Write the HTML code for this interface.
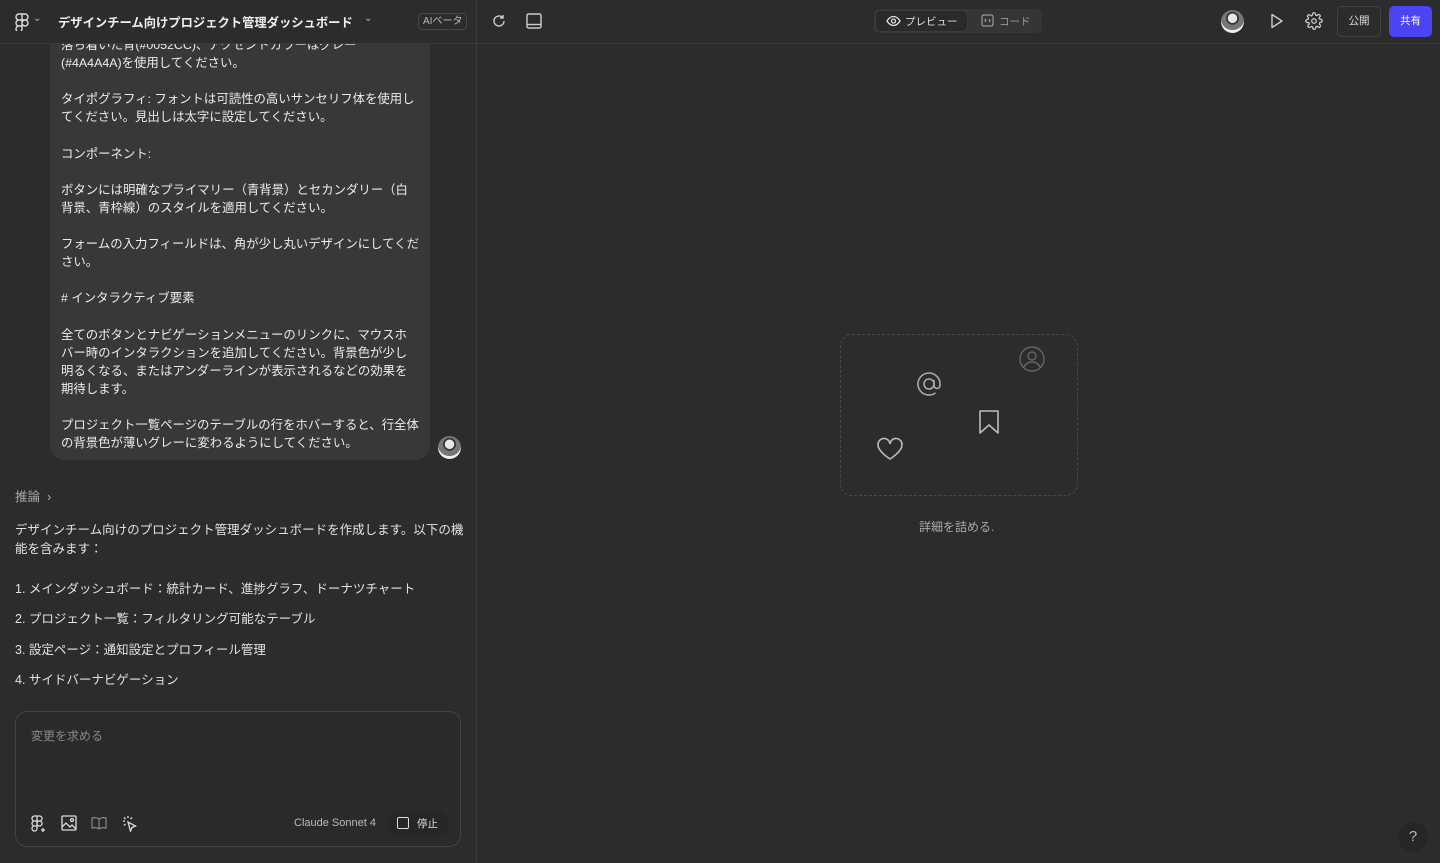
<!DOCTYPE html>
<html><head><meta charset="utf-8"><style>
*{box-sizing:border-box;margin:0;padding:0}
body{width:1440px;height:863px;background:#2c2c2c;color:#e6e6e6;font-family:"Liberation Sans","Noto Sans CJK JP",sans-serif;font-size:13px;overflow:hidden;position:relative}
.hdr{position:absolute;left:0;top:0;width:1440px;height:44px;background:#2c2c2c;border-bottom:1px solid #3a3a3a;z-index:5}
.vline{position:absolute;left:476px;top:0;width:1px;height:863px;background:#3a3a3a;z-index:6}
.abs{position:absolute}
.bubble{position:absolute;left:50px;top:20px;width:380px;height:440px;background:#383838;border-radius:14px;padding:16px 11px;line-height:18.1px;color:#ececec;font-size:12.4px;white-space:nowrap;overflow:hidden}
.bubble p{margin:0}
.ans{position:absolute;left:15px;color:#e2e2e2;font-size:12.5px;white-space:nowrap}
svg{display:block}
.av{border-radius:50%;background:radial-gradient(circle at 50% 36%,#e8e8e8 0 24%,#3a3a3a 26% 34%,#777 36% 62%,#eee 64%)}
</style></head><body>
<div class="vline"></div>
<div class="hdr">
 <svg class="abs" style="left:15px;top:13px" width="14" height="18" viewBox="0 0 14 18" fill="none" stroke="#ddd" stroke-width="1.4"><path d="M7 1H4a3 3 0 0 0 0 6h3zM7 1h3a3 3 0 0 1 0 6H7zM7 7H4a3 3 0 0 0 0 6h3zM10 7a3 3 0 1 1 0 6 3 3 0 0 1 0-6zM7 13H4a3 3 0 1 0 3 3z"/></svg>
 <div class="abs" style="left:33px;top:13px;color:#bbb;font-size:10px">⌄</div>
 <div class="abs" style="left:58px;top:13px;font-size:12.3px;font-weight:bold;color:#f0f0f0;white-space:nowrap">デザインチーム向けプロジェクト管理ダッシュボード</div>
 <div class="abs" style="left:364px;top:13px;color:#bbb;font-size:10px">⌄</div>
 <div class="abs" style="left:418px;top:13px;height:17px;padding:0 4px;border:1px solid #484848;border-radius:4px;font-size:10px;line-height:15px;color:#bbb">AIベータ</div>
 <svg class="abs" style="left:491px;top:13px" width="16" height="16" viewBox="0 0 16 16" fill="none" stroke="#ccc" stroke-width="1.4"><path d="M13 8a5 5 0 1 1-1.5-3.6M12 2v3h-3"/></svg>
 <svg class="abs" style="left:525px;top:12px" width="18" height="18" viewBox="0 0 18 18" fill="none" stroke="#ccc" stroke-width="1.4"><rect x="2" y="2" width="14" height="14" rx="1.5"/><path d="M2 12.5h14"/></svg>
 <div class="abs" style="left:874px;top:9px;width:168px;height:24px;background:#353535;border-radius:5px"></div>
 <div class="abs" style="left:875px;top:10px;width:93px;height:22px;background:#2a2a2a;border:1px solid #3c3c3c;border-radius:5px"></div>
 <svg class="abs" style="left:886px;top:14px" width="15" height="14" viewBox="0 0 15 14" fill="none" stroke="#ddd" stroke-width="1.3"><path d="M1 7s2.5-4.5 6.5-4.5S14 7 14 7s-2.5 4.5-6.5 4.5S1 7 1 7z"/><circle cx="7.5" cy="7" r="2"/></svg>
 <div class="abs" style="left:905px;top:14px;font-size:10.5px;color:#ddd">プレビュー</div>
 <svg class="abs" style="left:981px;top:14px" width="13" height="13" viewBox="0 0 13 13" fill="none" stroke="#999" stroke-width="1.2"><rect x="1" y="1" width="11" height="11" rx="1.5"/><path d="M5 5l-1 1.5L5 8M8 5l1 1.5L8 8"/></svg>
 <div class="abs" style="left:999px;top:14px;font-size:10.5px;color:#999">コード</div>
 <div class="abs av" style="left:1221px;top:10px;width:23px;height:23px"></div>
 <svg class="abs" style="left:1270px;top:13px" width="14" height="16" viewBox="0 0 14 16" fill="none" stroke="#ccc" stroke-width="1.4"><path d="M2 1.5v13l10-6.5z" stroke-linejoin="round"/></svg>
 <svg class="abs" style="left:1305px;top:12px" width="18" height="18" viewBox="0 0 24 24" fill="none" stroke="#ccc" stroke-width="1.7"><circle cx="12" cy="12" r="3"/><path d="M19.4 15a1.6 1.6 0 0 0 .3 1.8l.1.1a2 2 0 1 1-2.8 2.8l-.1-.1a1.6 1.6 0 0 0-2.7 1.1V21a2 2 0 1 1-4 0v-.1a1.6 1.6 0 0 0-2.7-1.1l-.1.1a2 2 0 1 1-2.8-2.8l.1-.1A1.6 1.6 0 0 0 3.6 14H3a2 2 0 1 1 0-4h.1a1.6 1.6 0 0 0 1.1-2.7l-.1-.1a2 2 0 1 1 2.8-2.8l.1.1A1.6 1.6 0 0 0 9.9 3.6V3a2 2 0 1 1 4 0v.1a1.6 1.6 0 0 0 2.7 1.1l.1-.1a2 2 0 1 1 2.8 2.8l-.1.1a1.6 1.6 0 0 0 1.1 2.7H21a2 2 0 1 1 0 4h-.1a1.6 1.6 0 0 0-1.5 1.3z"/></svg>
 <div class="abs" style="left:1337px;top:6px;width:44px;height:31px;border:1px solid #444;border-radius:5px;font-size:10.5px;line-height:29px;text-align:center;color:#ddd">公開</div>
 <div class="abs" style="left:1389px;top:6px;width:43px;height:31px;background:#4a44f5;border-radius:5px;font-size:10.5px;line-height:31px;text-align:center;color:#fff">共有</div>
</div>

<div class="bubble">
<p>落ち着いた青(#0052CC)、アクセントカラーはグレー</p>
<p>(#4A4A4A)を使用してください。</p><p>&nbsp;</p>
<p>タイポグラフィ: フォントは可読性の高いサンセリフ体を使用し</p><p>てください。見出しは太字に設定してください。</p><p>&nbsp;</p>
<p>コンポーネント:</p><p>&nbsp;</p>
<p>ボタンには明確なプライマリー（青背景）とセカンダリー（白</p><p>背景、青枠線）のスタイルを適用してください。</p><p>&nbsp;</p>
<p>フォームの入力フィールドは、角が少し丸いデザインにしてくだ</p><p>さい。</p><p>&nbsp;</p>
<p># インタラクティブ要素</p><p>&nbsp;</p>
<p>全てのボタンとナビゲーションメニューのリンクに、マウスホ</p><p>バー時のインタラクションを追加してください。背景色が少し</p><p>明るくなる、またはアンダーラインが表示されるなどの効果を</p><p>期待します。</p><p>&nbsp;</p>
<p>プロジェクト一覧ページのテーブルの行をホバーすると、行全体</p><p>の背景色が薄いグレーに変わるようにしてください。</p>
</div>
<div class="abs av" style="left:438px;top:436px;width:23px;height:23px"></div>

<div class="ans" style="top:486px;color:#aaa">推論 &nbsp;›</div>
<div class="ans" style="top:521px;line-height:19px">デザインチーム向けのプロジェクト管理ダッシュボードを作成します。以下の機<br>能を含みます：</div>
<div class="ans" style="top:578px">1. メインダッシュボード：統計カード、進捗グラフ、ドーナツチャート</div>
<div class="ans" style="top:608px">2. プロジェクト一覧：フィルタリング可能なテーブル</div>
<div class="ans" style="top:639px">3. 設定ページ：通知設定とプロフィール管理</div>
<div class="ans" style="top:669px">4. サイドバーナビゲーション</div>

<div class="abs" style="left:15px;top:711px;width:446px;height:136px;border:1px solid #444;border-radius:12px;background:#2a2a2a"></div>
<div class="abs" style="left:31px;top:727px;color:#888;font-size:12px">変更を求める</div>
<svg class="abs" style="left:31px;top:815px" width="16" height="17" viewBox="0 0 16 17" fill="none" stroke="#ddd" stroke-width="1.3"><path d="M6 1H3.5a2.5 2.5 0 0 0 0 5H6zM6 1h2.5a2.5 2.5 0 0 1 0 5H6zM6 6H3.5a2.5 2.5 0 0 0 0 5H6zM8.5 6a2.5 2.5 0 1 1 0 5 2.5 2.5 0 0 1 0-5zM6 11H3.5A2.5 2.5 0 1 0 6 13.5zM12 13v4M10 15h4"/></svg>
<svg class="abs" style="left:61px;top:815px" width="16" height="16" viewBox="0 0 16 16" fill="none" stroke="#ddd" stroke-width="1.3"><rect x="1" y="1" width="14" height="14" rx="1"/><path d="M1 12l4-4 4 4 2-2 4 4"/><circle cx="11" cy="5" r="1.5"/></svg>
<svg class="abs" style="left:91px;top:816px" width="16" height="14" viewBox="0 0 16 14" fill="none" stroke="#888" stroke-width="1.2"><path d="M8 3C6 1.5 3 1.5 1 2v10c2-.5 5-.5 7 1 2-1.5 5-1.5 7-1V2c-2-.5-5-.5-7 1zM8 3v10"/></svg>
<svg class="abs" style="left:121px;top:815px" width="18" height="17" viewBox="0 0 18 17" fill="none" stroke="#ddd" stroke-width="1.3"><path d="M7 1v2M2 6h2M3 2.5l1.5 1.5M11 2.5L9.5 4M3 10.5L4.5 9M7 7l2.5 9 1.5-3.5 3.5-1.5z"/></svg>
<div class="abs" style="left:294px;top:817px;color:#bbb;font-size:11px">Claude Sonnet 4</div>
<div class="abs" style="left:388px;top:811px;width:60px;height:25px;border-radius:12px;background:#262626"></div>
<div class="abs" style="left:397px;top:817px;width:12px;height:12px;border:1.3px solid #ddd;border-radius:2px"></div>
<div class="abs" style="left:417px;top:816px;color:#ddd;font-size:10.5px">停止</div>

<div class="abs" style="left:840px;top:334px;width:238px;height:162px;border:1px dashed #4a4a4a;border-radius:12px"></div>
<svg class="abs" style="left:1019px;top:346px" width="26" height="26" viewBox="0 0 26 26" fill="none" stroke="#666" stroke-width="1.4"><circle cx="13" cy="13" r="12"/><circle cx="13" cy="10" r="4"/><path d="M5 21c2-4 5-5 8-5s6 1 8 5"/></svg>
<svg class="abs" style="left:915px;top:370px" width="28" height="28" viewBox="0 0 28 28" fill="none" stroke="#aaa" stroke-width="1.6"><circle cx="14" cy="14" r="5"/><path d="M19 10v5.5a3 3 0 0 0 6 0V14a11 11 0 1 0-4.5 8.9"/></svg>
<svg class="abs" style="left:978px;top:409px" width="22" height="26" viewBox="0 0 22 26" fill="none" stroke="#bbb" stroke-width="1.6"><path d="M2 2h18v22l-9-8-9 8z" stroke-linejoin="round"/></svg>
<svg class="abs" style="left:876px;top:437px" width="28" height="24" viewBox="0 0 28 24" fill="none" stroke="#bbb" stroke-width="1.6"><path d="M14 22S2 14.5 2 8a6 6 0 0 1 12-1 6 6 0 0 1 12 1c0 6.5-12 14-12 14z"/></svg>
<div class="abs" style="left:919px;top:518px;color:#aaa;font-size:12px">詳細を詰める.</div>
<div class="abs" style="left:1398px;top:822px;width:30px;height:30px;border-radius:50%;background:#262626;color:#bbb;text-align:center;line-height:30px;font-size:15px">?</div>
</body></html>
